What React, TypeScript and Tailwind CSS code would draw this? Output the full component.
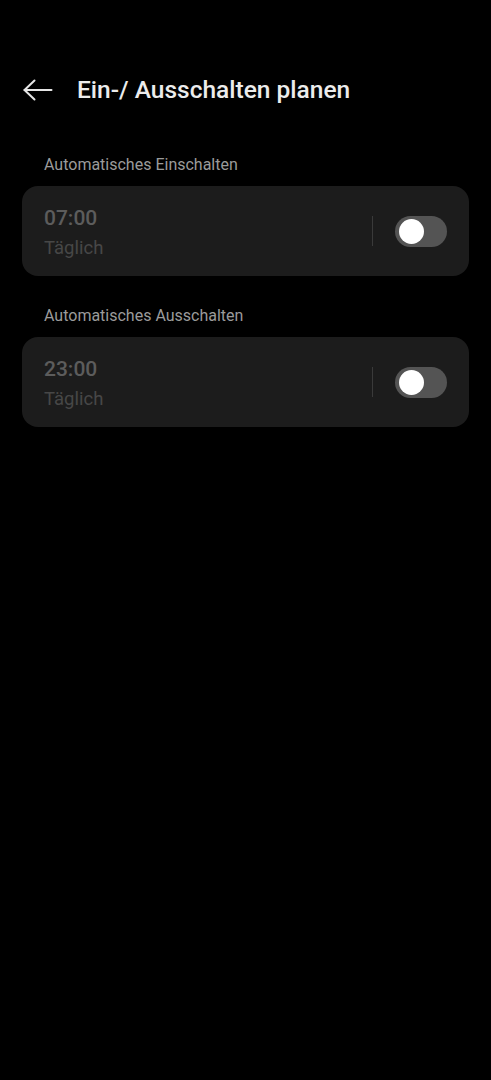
import { useState } from "react";

interface Schedule {
  label: string;
  time: string;
  repeat: string;
}

const SCHEDULES: Schedule[] = [
  { label: "Automatisches Einschalten", time: "07:00", repeat: "Täglich" },
  { label: "Automatisches Ausschalten", time: "23:00", repeat: "Täglich" },
];

function Toggle({ on, onChange }: { on: boolean; onChange: () => void }) {
  return (
    <button
      onClick={onChange}
      className={`flex items-center w-[52px] h-[31px] rounded-full px-[4px] ${
        on ? "bg-[#2f7cf6] justify-end" : "bg-[#545454] justify-start"
      }`}
    >
      <span className="w-[25px] h-[25px] rounded-full bg-white" />
    </button>
  );
}

function ScheduleCard({ s }: { s: Schedule }) {
  const [on, setOn] = useState(false);
  return (
    <div>
      <div className="px-[44px] h-[26px] flex items-center text-[16px] text-[#9b9b9b]">
        {s.label}
      </div>
      <div className="mx-[22px] mt-[8px] h-[90px] rounded-[16px] bg-[#1c1c1c] flex items-center pl-[22px] pr-[22px]">
        <div className="flex-1 flex flex-col pt-[2px]">
          <span className="text-[21px] leading-[28px] text-[#5c5c5c] font-medium">{s.time}</span>
          <span className="text-[18.5px] leading-[26px] text-[#474747] mt-[3px]">{s.repeat}</span>
        </div>
        <div className="w-px h-[30px] bg-[#3a3a3a] mr-[22px]" />
        <Toggle on={on} onChange={() => setOn(!on)} />
      </div>
    </div>
  );
}

export default function App() {
  return (
    <div
      className="w-[491px] h-[1080px] bg-black"
      style={{ fontFamily: "Roboto, 'Noto Sans', sans-serif" }}
    >
      <div className="h-[60px]" />
      {/* Header */}
      <div className="h-[60px] flex items-center">
        <svg
          width="30"
          height="22"
          viewBox="0 0 30 22"
          className="ml-[23px]"
          fill="none"
          stroke="#e6e6e6"
          strokeWidth="2"
          strokeLinecap="round"
          strokeLinejoin="round"
        >
          <path d="M1.5 11H28.5" />
          <path d="M11.5 1.5L1.5 11L11.5 20.5" />
        </svg>
        <h1 className="ml-[24px] text-[24.5px] font-medium text-[#ececec]">
          Ein-/ Ausschalten planen
        </h1>
      </div>

      <div className="mt-[32px] flex flex-col gap-[27px]">
        {SCHEDULES.map((s) => (
          <ScheduleCard key={s.label} s={s} />
        ))}
      </div>
    </div>
  );
}
